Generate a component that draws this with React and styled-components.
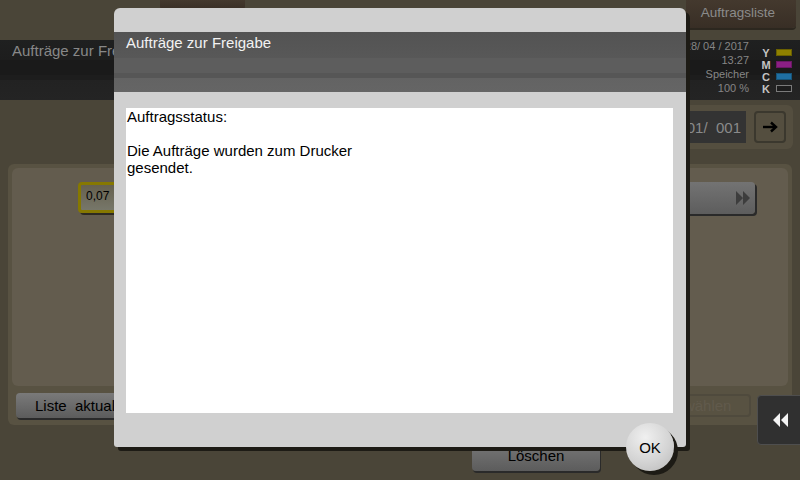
import React from "react";
import styled, { createGlobalStyle } from "styled-components";

const GlobalStyle = createGlobalStyle`
  html, body {
    margin: 0;
    padding: 0;
    background: #4a4538;
  }
  * {
    box-sizing: border-box;
  }
`;

const font = `font-family: "Liberation Sans", Arial, sans-serif;`;

const Screen = styled.div`
  ${font}
  position: relative;
  width: 800px;
  height: 480px;
  overflow: hidden;
  background: #4a4538;
  display: flex;
  flex-direction: column;
`;

/* ---------- page behind the dialog (already dimmed) ---------- */

const TopRow = styled.div`
  height: 40px;
  display: flex;
  align-items: flex-start;
`;

const TopTab = styled.div`
  margin-left: ${p => (p.$right ? "auto" : "160px")};
  margin-right: ${p => (p.$right ? "4px" : "0")};
  width: ${p => (p.$right ? "110px" : "85px")};
  height: ${p => (p.$right ? "28px" : "10px")};
  background: linear-gradient(#44392e, #382e25);
  border-radius: 0 0 4px 4px;
  box-shadow: 0 2px 0 #2c271f;
  color: #8b8b8b;
  font-size: 13.5px;
  display: flex;
  align-items: center;
  justify-content: center;
  padding: 0 6px 4px 0;
`;

const HeaderBar = styled.div`
  height: 60px;
  display: flex;
  align-items: flex-start;
  background: linear-gradient(
    #1f2020 0px,
    #1d1d1d 20px,
    #1a1a1a 20px,
    #1a1a1a 35px,
    #1d1d1d 35px,
    #1d1d1d 40px,
    #222222 40px,
    #242424 60px
  );
`;

/* the dialog hides everything right of x=114, so clip the title there */
const HeaderTitle = styled.div`
  margin-left: 12px;
  width: 102px;
  padding-top: 2px;
  overflow: hidden;
  white-space: nowrap;
  font-size: 15px;
  line-height: 18px;
  color: #888888;
`;

const Status = styled.div`
  margin-left: auto;
  display: flex;
  align-items: flex-start;
  padding-right: 8px;
`;

const StatusText = styled.div`
  margin-top: -1px;
  font-size: 11px;
  line-height: 14px;
  color: #868686;
  text-align: right;
`;

const InkLetters = styled.div`
  margin: 7px 0 0 10px;
  width: 14px;
  font-size: 11px;
  font-weight: bold;
  line-height: 12px;
  color: #c4c4c4;
  text-align: center;
`;

const InkSwatches = styled.div`
  margin: 9px 0 0 3px;
  display: flex;
  flex-direction: column;
  gap: 5px;
`;

const Swatch = styled.div`
  width: 16px;
  height: 7px;
  background: ${p => p.$fill};
  border: 1px solid ${p => p.$edge};
`;

const PagerRow = styled.div`
  height: 64px;
  display: flex;
  align-items: flex-start;
`;

const Pager = styled.div`
  margin: 5px 7px 0 auto;
  height: 44px;
  padding: 0 7px 0 7px;
  display: flex;
  align-items: center;
  gap: 8px;
  background: #544e3f;
  border-radius: 6px;
`;

const Counter = styled.div`
  width: 120px;
  height: 32px;
  background: #333333;
  color: #8a8a8a;
  font-size: 15px;
  display: flex;
  align-items: center;
  justify-content: flex-end;
  padding-right: 5px;
  white-space: pre;
`;

const ArrowButton = styled.div`
  width: 32px;
  height: 32px;
  border: 2px solid #3b382e;
  border-radius: 4px;
  display: flex;
  align-items: center;
  justify-content: center;
`;

const OuterPanel = styled.div`
  margin: 0 8px;
  height: 261px;
  padding: 4px 4px 0 4px;
  background: #585242;
  border-radius: 6px;
  display: flex;
  flex-direction: column;
`;

const InnerPanel = styled.div`
  height: 218px;
  background: #635c4e;
  border-radius: 6px;
  padding: 14px 33px 0 66px;
  display: flex;
  align-items: flex-start;
  gap: 8px;
`;

const ValueTag = styled.div`
  width: 60px;
  height: 31px;
  border: 3px solid #867800;
  border-radius: 4px;
  background: linear-gradient(#66614e, #77776a);
  box-shadow: 2px 2px 0 #2e2b22;
  font-size: 12px;
  color: #000;
  padding: 4px 0 0 5px;
`;

const ListBar = styled.div`
  flex: 1;
  height: 32px;
  border-radius: 4px;
  background: linear-gradient(#737373, #5d5d5d);
  box-shadow: 2px 2px 0 #2a2a2a;
  display: flex;
  align-items: center;
  justify-content: flex-end;
  padding-right: 5px;
`;

const PanelFooter = styled.div`
  flex: 1;
  display: flex;
  align-items: center;
  padding: 0 37px 0 4px;
`;

const GrayButton = styled.div`
  width: ${p => p.$w}px;
  height: ${p => p.$h}px;
  border-radius: 4px;
  background: linear-gradient(#7a7a7a, #5c5c5c);
  box-shadow: 1px 2px 0 #2a2a2a;
  color: #000;
  font-size: 15px;
  display: flex;
  align-items: center;
  padding-left: ${p => (p.$center ? "0" : "19px")};
  justify-content: ${p => (p.$center ? "center" : "flex-start")};
  white-space: pre;
`;

const GhostButton = styled.div`
  margin-left: auto;
  width: 140px;
  height: 23px;
  border: 2px solid #4f4a3d;
  border-radius: 4px;
  color: #615a4c;
  font-size: 15px;
  display: flex;
  align-items: center;
  justify-content: center;
`;

const BottomRow = styled.div`
  flex: 1;
  padding: 15px 0 0 472px;
`;

const BackTab = styled.div`
  position: absolute;
  left: 757px;
  top: 395px;
  width: 45px;
  height: 50px;
  background: #303030;
  border: 1px solid #4e4e4e;
  border-radius: 4px 0 0 4px;
  display: flex;
  align-items: center;
  justify-content: center;
`;

/* ---------- dialog ---------- */

const Dialog = styled.div`
  position: absolute;
  left: 114px;
  top: 8px;
  width: 572px;
  height: 439px;
  background: #d0d0d0;
  border-radius: 6px 6px 3px 3px;
  box-shadow: 4px 4px 0 #1d1b15;
  display: flex;
  flex-direction: column;
  padding-top: 24px;
`;

const DialogHeader = styled.div`
  height: 60px;
  padding: 2px 0 0 12px;
  color: #f2f2f2;
  font-size: 15px;
  line-height: 18px;
  background: linear-gradient(
    #535353 0px,
    #585858 26px,
    #5d5d5d 26px,
    #5d5d5d 41px,
    #565656 41px,
    #565656 46px,
    #636363 46px,
    #656565 60px
  );
`;

const Message = styled.div`
  margin: 16px 13px 0 12px;
  height: 305px;
  background: #ffffff;
  padding: 0 0 0 1px;
  color: #000;
  font-size: 15px;
  line-height: 17px;
`;

const OkButton = styled.div`
  position: absolute;
  left: 512px;
  top: 415px;
  width: 48px;
  height: 48px;
  border-radius: 50%;
  background: radial-gradient(circle at 40% 30%, #f0f0f0, #d4d4d4 55%, #b8b8b8);
  box-shadow: 4px 4px 0 #1d1b15;
  display: flex;
  align-items: center;
  justify-content: center;
  color: #000;
  font-size: 15px;
`;

const FastForward = () => (
  <svg width="14" height="14" viewBox="0 0 14 14">
    <path d="M0 0 L7 7 L0 14 Z M7 0 L14 7 L7 14 Z" fill="#3d3d3d" />
  </svg>
);

const Rewind = () => (
  <svg width="20" height="14" viewBox="0 0 20 14">
    <path d="M10 0 L3 7 L10 14 Z M18 0 L11 7 L18 14 Z" fill="#f4f4f4" />
  </svg>
);

const RightArrow = () => (
  <svg width="16" height="12" viewBox="0 0 16 12">
    <path d="M1 6 H13" stroke="#000" strokeWidth="2.4" />
    <path d="M9 1.5 L14 6 L9 10.5" stroke="#000" strokeWidth="2.4" fill="none" />
  </svg>
);

const inks = [
  { letter: "Y", fill: "#8f8100", edge: "#6a6000" },
  { letter: "M", fill: "#8c1f84", edge: "#6a1864" },
  { letter: "C", fill: "#1f6fa2", edge: "#175478" },
  { letter: "K", fill: "#1c1c1c", edge: "#7a7a7a" }
];

export default function App() {
  return (
    <>
      <GlobalStyle />
      <Screen>
        <TopRow>
          <TopTab />
          <TopTab $right>Auftragsliste</TopTab>
        </TopRow>

        <HeaderBar>
          <HeaderTitle>Aufträge zur Freigabe</HeaderTitle>
          <Status>
            <StatusText>
              28/ 04 / 2017
              <br />
              13:27
              <br />
              Speicher
              <br />
              100 %
            </StatusText>
            <InkLetters>
              {inks.map(i => (
                <div key={i.letter}>{i.letter}</div>
              ))}
            </InkLetters>
            <InkSwatches>
              {inks.map(i => (
                <Swatch key={i.letter} $fill={i.fill} $edge={i.edge} />
              ))}
            </InkSwatches>
          </Status>
        </HeaderBar>

        <PagerRow>
          <Pager>
            <Counter>{"001/  001"}</Counter>
            <ArrowButton>
              <RightArrow />
            </ArrowButton>
          </Pager>
        </PagerRow>

        <OuterPanel>
          <InnerPanel>
            <ValueTag>0,07</ValueTag>
            <ListBar>
              <FastForward />
            </ListBar>
          </InnerPanel>
          <PanelFooter>
            <GrayButton $w={160} $h={25}>{"Liste  aktualisieren"}</GrayButton>
            <GhostButton>Alle auswählen</GhostButton>
          </PanelFooter>
        </OuterPanel>

        <BottomRow>
          <GrayButton $w={128} $h={31} $center>
            Löschen
          </GrayButton>
        </BottomRow>

        <BackTab>
          <Rewind />
        </BackTab>

        <Dialog>
          <DialogHeader>Aufträge zur Freigabe</DialogHeader>
          <Message>
            Auftragsstatus:
            <br />
            <br />
            Die Aufträge wurden zum Drucker
            <br />
            gesendet.
          </Message>
          <OkButton>OK</OkButton>
        </Dialog>
      </Screen>
    </>
  );
}
